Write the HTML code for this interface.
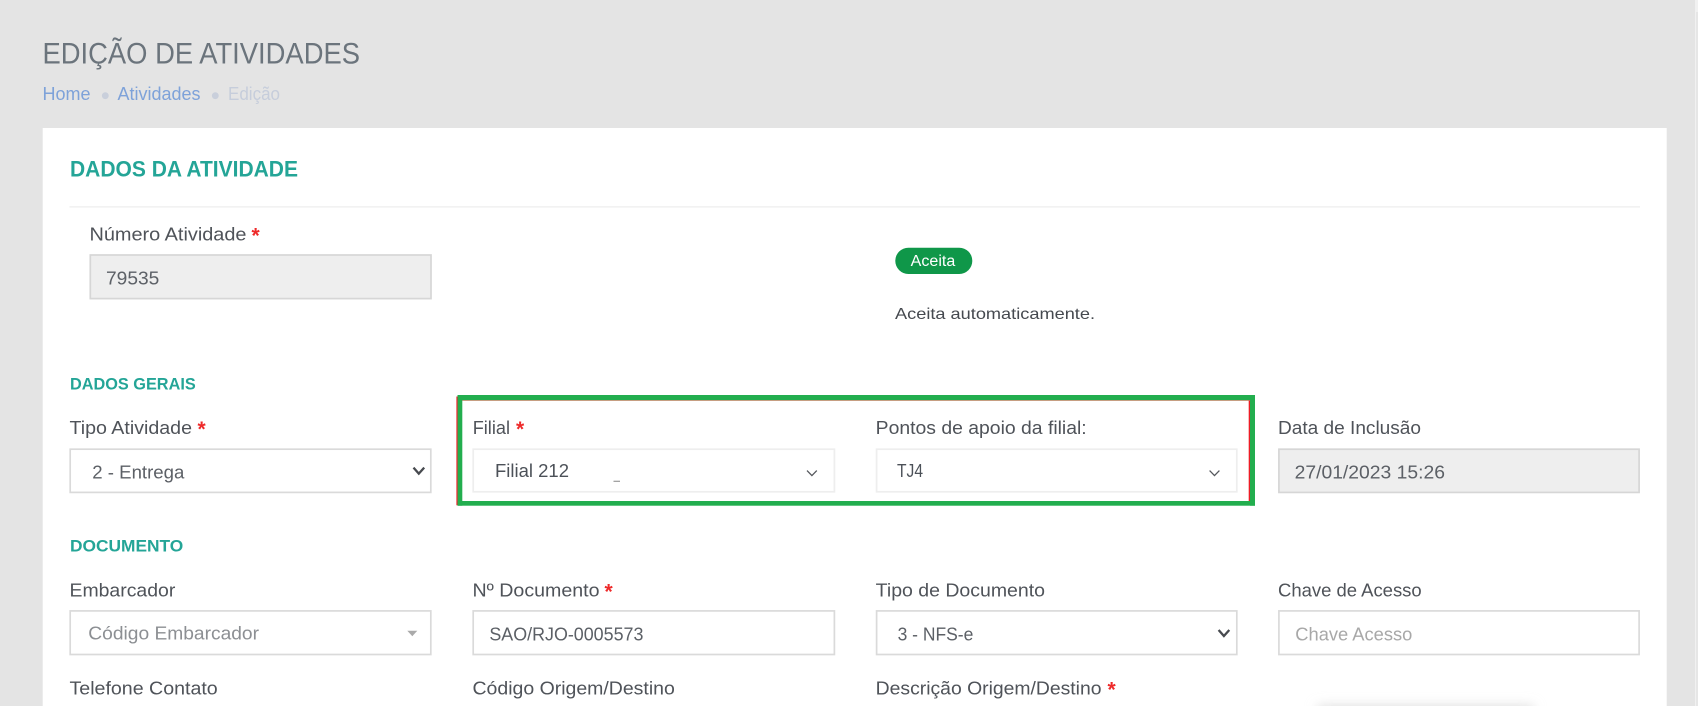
<!DOCTYPE html>
<html lang="pt-BR">
<head>
<meta charset="utf-8">
<title>Edição de Atividades</title>
<style>
html,body{margin:0;padding:0;background:#fff;width:1698px;height:716px;overflow:hidden}
svg{display:block}
text{font-family:"Liberation Sans",Arial,sans-serif}
.t{filter:blur(.3px)}
.l{font-size:18.2px;fill:#4f5359}
.v{font-size:18.2px;fill:#5c6066}
.s{font-size:21px;font-weight:700;fill:#ee2a2a}
.h{font-size:17px;font-weight:700;fill:#24a597}
.box{fill:#fff;stroke:#dadada;stroke-width:1.7}
.dis{fill:#eeeeee;stroke:#d6d6d6;stroke-width:1.7}
.lite{fill:#fff;stroke:#eeeeee;stroke-width:1.7}
</style>
</head>
<body>
<svg width="1698" height="716" viewBox="0 0 1698 716" xmlns="http://www.w3.org/2000/svg">
<defs>
<filter id="sh" x="-20%" y="-200%" width="140%" height="500%"><feGaussianBlur stdDeviation="6"/></filter>
<clipPath id="cp"><rect x="0" y="0" width="1698" height="706"/></clipPath>
</defs>

<!-- page background -->
<rect x="0" y="0" width="1695" height="706" fill="#e4e4e4"/>
<rect x="1695" y="0" width="3" height="706" fill="#f1f1f1"/>
<rect x="1696.5" y="12" width="1" height="694" fill="#dcdcdc"/>

<!-- card -->
<rect x="42.7" y="128" width="1624" height="578" fill="#fff"/>

<g class="t">
<!-- header -->
<text x="42.5" y="63.6" font-size="29.5" fill="#6b747c" textLength="317.5" lengthAdjust="spacingAndGlyphs">EDIÇÃO DE ATIVIDADES</text>
<text x="42.5" y="100" font-size="18" fill="#7ea2d9" textLength="48" lengthAdjust="spacingAndGlyphs">Home</text>
<circle cx="105.3" cy="95.7" r="3.4" fill="#c9cfdb"/>
<text x="117.5" y="100" font-size="18" fill="#7ea2d9" textLength="83" lengthAdjust="spacingAndGlyphs">Atividades</text>
<circle cx="215.3" cy="95.7" r="3.4" fill="#c9cfdb"/>
<text x="228" y="100" font-size="18" fill="#c6cddb" textLength="52" lengthAdjust="spacingAndGlyphs">Edição</text>

<!-- card title -->
<text x="70" y="176.4" font-size="22" font-weight="700" fill="#24a597" textLength="228" lengthAdjust="spacingAndGlyphs">DADOS DA ATIVIDADE</text>
</g>
<rect x="69.5" y="206.2" width="1570.5" height="1.4" fill="#efefef"/>

<!-- numero atividade -->
<g class="t">
<text class="l" x="89.5" y="240.6" textLength="157" lengthAdjust="spacingAndGlyphs">Número Atividade</text>
<text class="s" x="251.5" y="242.4">*</text>
</g>
<rect class="dis" x="90.3" y="255" width="340.7" height="43.6"/>
<text class="v t" x="106" y="284.4" textLength="53.3" lengthAdjust="spacingAndGlyphs">79535</text>

<!-- status -->
<rect x="895.3" y="247.7" width="77" height="26.3" rx="13.1" fill="#0f9749"/>
<g class="t">
<text x="910.7" y="265.9" font-size="15.5" fill="#fff" textLength="44.6" lengthAdjust="spacingAndGlyphs">Aceita</text>
<text x="895" y="318.8" font-size="16" fill="#45494f" textLength="200" lengthAdjust="spacingAndGlyphs">Aceita automaticamente.</text>
</g>

<!-- dados gerais -->
<g class="t">
<text class="h" x="70" y="389.6" textLength="125.7" lengthAdjust="spacingAndGlyphs">DADOS GERAIS</text>
<text class="l" x="69.5" y="434.2" textLength="122.5" lengthAdjust="spacingAndGlyphs">Tipo Atividade</text>
<text class="s" x="197.5" y="436">*</text>
</g>
<rect class="box" x="70.2" y="449.2" width="360.6" height="43.2"/>
<text class="v t" x="92.3" y="478.4" textLength="92" lengthAdjust="spacingAndGlyphs">2 - Entrega</text>
<path d="M413.5 467.6 L418.8 473.6 L424.2 467.6" fill="none" stroke="#474a4f" stroke-width="2.3"/>

<!-- highlight frame -->
<rect x="456.4" y="396.5" width="1.4" height="108.8" fill="#ee1c25"/>
<rect x="462" y="400" width="787" height="1" fill="#ef9a8f"/>
<rect x="1248.7" y="400.3" width="1.4" height="101" fill="#ee1c25"/>
<rect x="457.6" y="395" width="797.4" height="5.2" fill="#22ae4e"/>
<rect x="457.6" y="501" width="797.4" height="4.7" fill="#22ae4e"/>
<rect x="457.6" y="395" width="4.7" height="110.7" fill="#22ae4e"/>
<rect x="1250" y="395" width="5" height="110.7" fill="#22ae4e"/>

<!-- filial -->
<g class="t">
<text class="l" x="472.7" y="434.2" textLength="37.3" lengthAdjust="spacingAndGlyphs">Filial</text>
<text class="s" x="516" y="436">*</text>
</g>
<rect class="lite" x="473.2" y="449.2" width="361.2" height="42.6"/>
<text class="t" x="495" y="477" font-size="18.2" fill="#4c5158" textLength="74" lengthAdjust="spacingAndGlyphs">Filial 212</text>
<rect x="613.5" y="480.7" width="6.5" height="1.2" fill="#9a9a9a"/>
<path d="M807 470.6 L811.9 475.6 L816.8 470.6" fill="none" stroke="#55585d" stroke-width="1.3"/>

<!-- pontos -->
<text class="l t" x="875.7" y="434.2" textLength="211" lengthAdjust="spacingAndGlyphs">Pontos de apoio da filial:</text>
<rect class="lite" x="876.6" y="449.2" width="360.2" height="42.6"/>
<text class="t" x="897" y="477" font-size="18.2" fill="#4c5158" textLength="26" lengthAdjust="spacingAndGlyphs">TJ4</text>
<path d="M1209.6 470.6 L1214.5 475.6 L1219.4 470.6" fill="none" stroke="#55585d" stroke-width="1.3"/>

<!-- data inclusao -->
<text class="l t" x="1278" y="434.2" textLength="143" lengthAdjust="spacingAndGlyphs">Data de Inclusão</text>
<rect class="dis" x="1278.9" y="449.2" width="360.2" height="43.2"/>
<text class="v t" x="1294.6" y="478.4" textLength="150.4" lengthAdjust="spacingAndGlyphs">27/01/2023 15:26</text>

<!-- documento -->
<g class="t">
<text class="h" x="70" y="551.6" textLength="113.3" lengthAdjust="spacingAndGlyphs">DOCUMENTO</text>
<text class="l" x="69.5" y="596.6" textLength="105.8" lengthAdjust="spacingAndGlyphs">Embarcador</text>
<text class="l" x="472.5" y="596.6" textLength="127" lengthAdjust="spacingAndGlyphs">Nº Documento</text>
<text class="s" x="604.5" y="598.4">*</text>
<text class="l" x="875.7" y="596.6" textLength="169.3" lengthAdjust="spacingAndGlyphs">Tipo de Documento</text>
<text class="l" x="1278" y="596.6" textLength="143.7" lengthAdjust="spacingAndGlyphs">Chave de Acesso</text>
</g>

<rect class="box" x="70.2" y="610.9" width="360.6" height="43.6"/>
<text class="t" x="88.3" y="639.6" font-size="18.2" fill="#8c8f93" textLength="170.7" lengthAdjust="spacingAndGlyphs">Código Embarcador</text>
<path d="M407.3 630.7 H417.3 L412.3 636.2 Z" fill="#aaaaaa"/>

<rect class="box" x="473.2" y="610.9" width="361.2" height="43.6"/>
<text class="v t" x="489.4" y="640.6" textLength="154" lengthAdjust="spacingAndGlyphs">SAO/RJO-0005573</text>

<rect class="box" x="876.6" y="610.9" width="360.2" height="43.6"/>
<text class="v t" x="897.6" y="640.6" textLength="75.7" lengthAdjust="spacingAndGlyphs">3 - NFS-e</text>
<path d="M1218.6 630 L1223.9 636 L1229.3 630" fill="none" stroke="#474a4f" stroke-width="2.3"/>

<rect class="box" x="1278.9" y="610.9" width="360.2" height="43.6"/>
<text class="t" x="1295.3" y="640.6" font-size="18.2" fill="#a8a8a8" textLength="117" lengthAdjust="spacingAndGlyphs">Chave Acesso</text>

<!-- third row -->
<g class="t" clip-path="url(#cp)">
<text class="l" x="69.5" y="694.6" textLength="148.2" lengthAdjust="spacingAndGlyphs">Telefone Contato</text>
<text class="l" x="472.5" y="694.6" textLength="202.3" lengthAdjust="spacingAndGlyphs">Código Origem/Destino</text>
<text class="l" x="875.7" y="694.6" textLength="225.8" lengthAdjust="spacingAndGlyphs">Descrição Origem/Destino</text>
<text class="s" x="1107.5" y="696.4">*</text>
</g>

<!-- floating shadow -->
<g clip-path="url(#cp)">
<rect x="1318" y="706" width="215" height="14" fill="#dcdcdc" filter="url(#sh)"/>
</g>

<!-- white bottom strip -->
<rect x="0" y="706" width="1698" height="10" fill="#fff"/>
</svg>
</body>
</html>
